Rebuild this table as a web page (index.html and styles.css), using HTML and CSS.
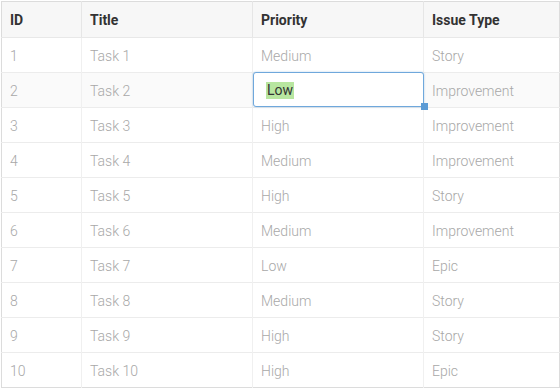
FILE: index.html
```html
<!DOCTYPE html>
<html>
<head>
<meta charset="utf-8">
<link rel="stylesheet" href="styles.css">
</head>
<body>
<div class="wrap">
<table class="grid">
<colgroup><col class="c-id"><col class="c-title"><col class="c-pri"><col class="c-type"></colgroup>
<thead>
<tr><th>ID</th><th>Title</th><th>Priority</th><th>Issue Type</th></tr>
</thead>
<tbody>
<tr><td>1</td><td>Task 1</td><td>Medium</td><td>Story</td></tr>
<tr class="alt"><td>2</td><td>Task 2</td><td class="editing"><div class="editor"><span class="sel">Low</span></div><span class="handle"></span></td><td>Improvement</td></tr>
<tr><td>3</td><td>Task 3</td><td>High</td><td>Improvement</td></tr>
<tr><td>4</td><td>Task 4</td><td>Medium</td><td>Improvement</td></tr>
<tr><td>5</td><td>Task 5</td><td>High</td><td>Story</td></tr>
<tr><td>6</td><td>Task 6</td><td>Medium</td><td>Improvement</td></tr>
<tr><td>7</td><td>Task 7</td><td>Low</td><td>Epic</td></tr>
<tr><td>8</td><td>Task 8</td><td>Medium</td><td>Story</td></tr>
<tr><td>9</td><td>Task 9</td><td>High</td><td>Story</td></tr>
<tr><td>10</td><td>Task 10</td><td>High</td><td>Epic</td></tr>
</tbody>
</table>
</div>
</body>
</html>
```
FILE: styles.css
```css
html, body { margin: 0; padding: 0; background: #fff; }
body { font-family: Roboto, "Liberation Sans", sans-serif; font-size: 14px; }
.wrap { padding: 1px 0 0 1px; width: 558px; }
.grid {
  border-collapse: collapse;
  table-layout: fixed;
  width: 558px;
  border: 1px solid #dcdcdc;
}
.c-id { width: 80px; }
.c-title { width: 171px; }
.c-pri { width: 171px; }
.c-type { width: 136px; }
th {
  background: #f7f7f7;
  color: #333;
  font-weight: 700;
  text-align: left;
  height: 35px;
  padding: 0 8px;
  border-left: 1px solid #e6e6e6;
  border-bottom: 1px solid #e8e8e8;
}
td {
  color: #a8a8a8;
  font-weight: 300;
  height: 33px;
  padding: 1px 8px 0;
  border-left: 1px solid #f0f0f0;
  border-top: 1px solid #ececec;
  white-space: nowrap;
}
th:first-child, td:first-child { border-left: none; }
.alt td { background: #fafafa; }
td.editing { position: relative; padding: 0; background: #fff; }
.editor {
  position: absolute;
  left: 0; top: -1px; right: -1px; bottom: 0;
  border: 1px solid #6fa8dc;
  border-radius: 3px;
  background: #fff;
  box-shadow: 0 0 2px rgba(91,155,213,.5);
  display: flex;
  align-items: center;
  padding-left: 12px;
  padding-top: 1px;
}
.sel { background: #b8e6a0; color: #333; font-weight: 400; padding: 0 1px; line-height: 17px; }
.handle {
  position: absolute;
  right: -5px; bottom: -3px;
  width: 7px; height: 7px;
  background: #5b9bd5;
  z-index: 2;
}
```
